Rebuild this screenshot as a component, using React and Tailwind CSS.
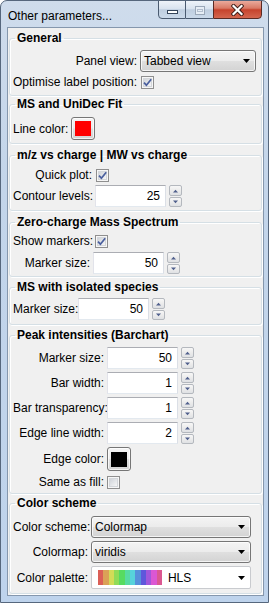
import React from "react";

const Tri = ({ up }) => (
  <svg width="7" height="4" viewBox="0 0 7 4" className="block">
    <path d={up ? "M1 3.5L3.5 0.8L6 3.5Z" : "M1 0.5L6 0.5L3.5 3.2Z"} fill="#4f5f8c" />
  </svg>
);

function SpinBtn({ up, className }) {
  return (
    <div
      className={
        "w-[13px] rounded-[2px] border border-[#b4b8be] bg-[linear-gradient(180deg,#f7f7f7_0%,#ececec_50%,#dfe1e4_100%)] flex items-center justify-center " +
        className
      }
    >
      <Tri up={up} />
    </div>
  );
}

function Spin({ value }) {
  return (
    <div className="flex items-center gap-[3px]">
      <div className="w-[71px] h-[22px] bg-white border border-[#abadb3] border-l-[#e2e3ea] border-r-[#dbdfe6] border-b-[#e3e9ef] flex items-center justify-end pr-[5px]">
        {value}
      </div>
      <div className="flex flex-col gap-[1px]">
        <SpinBtn up className="h-[11px]" />
        <SpinBtn className="h-[10px]" />
      </div>
    </div>
  );
}

function CheckBox({ checked, className = "" }) {
  return (
    <svg width="13" height="13" viewBox="0 0 13 13" className={"block " + className}>
      <defs>
        <linearGradient id="cbg" x1="0" y1="0" x2="1" y2="1">
          <stop offset="0" stopColor="#cdd1d7" />
          <stop offset="1" stopColor="#f8f8f8" />
        </linearGradient>
      </defs>
      <rect x="0.5" y="0.5" width="12" height="12" fill="#f6f6f6" stroke="#8f8f8f" />
      <rect x="2.5" y="2.5" width="8" height="8" fill="url(#cbg)" stroke="#d3d6da" />
      {checked && (
        <path d="M3 6.6L5.4 9.2L10.2 3.2" fill="none" stroke="#4a5f9e" strokeWidth="1.7" />
      )}
    </svg>
  );
}

function Combo({ text, className = "" }) {
  return (
    <div
      className={
        "h-[22px] rounded-[3px] border border-[#767676] bg-[linear-gradient(180deg,#f4f4f4_0%,#ececec_48%,#dfdfdf_52%,#d3d3d3_100%)] shadow-[inset_0_0_0_1px_rgba(255,255,255,0.75)] flex items-center pl-[3px] pr-[5px] " +
        className
      }
    >
      <span className="flex-1">{text}</span>
      <svg width="7" height="4" viewBox="0 0 7 4" className="block">
        <path d="M0 0H7L3.5 4Z" fill="#000" />
      </svg>
    </div>
  );
}

function ColorBtn({ color, className = "" }) {
  return (
    <div
      className={
        "w-[24px] rounded-[3px] border border-[#767676] bg-[linear-gradient(180deg,#f4f4f4_0%,#ececec_48%,#dfdfdf_52%,#d3d3d3_100%)] shadow-[inset_0_0_0_1px_rgba(255,255,255,0.75)] flex items-center justify-center " +
        className
      }
    >
      <div className={"w-[16px] h-[15px] " + color} />
    </div>
  );
}

const HLS = [
  "#db5f57",
  "#dba157",
  "#d3db57",
  "#91db57",
  "#57db5f",
  "#57dba1",
  "#57d3db",
  "#5791db",
  "#5f57db",
  "#a157db",
  "#db57d3",
  "#db5791",
];

function Group({ title, className = "", children }) {
  return (
    <fieldset
      className={
        "border border-[#d5dfe5] rounded-[3px] pl-[3px] pr-[4px] shadow-[inset_1px_1px_0_#ffffff,1px_1px_0_#ffffff] " +
        className
      }
    >
      <legend className="ml-[2px] px-[2px] font-bold leading-[14px]">{title}</legend>
      {children}
    </fieldset>
  );
}

function Row({ label, labelW, className = "h-[22px]", children }) {
  return (
    <div className={"flex items-center " + className}>
      <span className={"text-right pr-[3px] whitespace-nowrap " + labelW}>{label}</span>
      {children}
    </div>
  );
}

export default function App() {
  return (
    <div className="w-[269px] h-[603px] bg-[linear-gradient(180deg,#cfdcec_0%,#c3d5ea_30%,#bed3ec_100%)] border border-[#56677d] rounded-t-[7px] flex flex-col overflow-hidden font-['Liberation_Sans',Arial,sans-serif] text-[12px] text-black">
      {/* title bar */}
      <div className="h-[26px] flex items-start shrink-0">
        <span className="pl-[7px] pt-[8px] leading-[14px]">Other parameters...</span>
        <div className="ml-auto mr-[6px] flex h-[19px] -mt-[1px]">
          <div className="w-[28px] h-full border border-[#4a5a70] rounded-bl-[4px] bg-[linear-gradient(180deg,#eef3f9_0%,#d9e3ef_45%,#bfcee0_52%,#cbd9ea_100%)] flex items-center justify-center">
            <div className="w-[11px] h-[4px] mt-[5px] bg-white border border-[#34445a]" />
          </div>
          <div className="w-[27px] h-full border-y border-[#4a5a70] bg-[linear-gradient(180deg,#eef3f9_0%,#d9e3ef_45%,#bfcee0_52%,#cbd9ea_100%)] flex items-center justify-center">
            <div className="w-[10px] h-[9px] border border-[#9aa7b8] bg-[#e6edf5] flex items-center justify-center mt-[1px]">
              <div className="w-[6px] h-[3px] border border-[#b3bece]" />
            </div>
          </div>
          <div className="w-[49px] h-full border border-[#5a2a24] rounded-br-[4px] bg-[linear-gradient(180deg,#eaaa9c_0%,#d97a66_42%,#c6432d_52%,#d4664f_100%)] flex items-center justify-center">
            <svg width="13" height="12" viewBox="0 0 13 12" className="block">
              <path d="M2.5 2L10.5 10M10.5 2L2.5 10" stroke="#3a1a16" strokeWidth="4" strokeLinecap="square" />
              <path d="M2.5 2L10.5 10M10.5 2L2.5 10" stroke="#ffffff" strokeWidth="2.2" strokeLinecap="square" />
            </svg>
          </div>
        </div>
      </div>

      {/* client area */}
      <div className="ml-[6px] mr-[4px] mb-[6px] flex-1 bg-[#f0f0f0] border border-[#8597ad] flex flex-col px-[1px] pt-[3px]">
        <Group title="General" className="pt-[5px] pb-[5px]">
          <div className="flex flex-col gap-[2px]">
            <Row label="Panel view:" labelW="w-[127px]">
              <Combo text="Tabbed view" className="w-[116px]" />
            </Row>
            <Row label="Optimise label position:" labelW="w-[127px]" className="h-[16px]">
              <CheckBox checked className="ml-[1px]" />
            </Row>
          </div>
        </Group>

        <Group title="MS and UniDec Fit" className="mt-[1px] pt-[6px] pb-[3px]">
          <Row label="Line color:" labelW="w-[58px]" className="h-[23px]">
            <ColorBtn color="bg-[#ff0000]" className="h-[23px]" />
          </Row>
        </Group>

        <Group title="m/z vs charge | MW vs charge" className="mt-[4px] pt-[5px] pb-[3px]">
          <div className="flex flex-col gap-[2px]">
            <Row label="Quick plot:" labelW="w-[82px]" className="h-[16px]">
              <CheckBox checked className="ml-[1px]" />
            </Row>
            <Row label="Contour levels:" labelW="w-[82px]">
              <Spin value="25" />
            </Row>
          </div>
        </Group>

        <Group title="Zero-charge Mass Spectrum" className="mt-[4px] pt-[4px] pb-[2px]">
          <div className="flex flex-col gap-[3px]">
            <Row label="Show markers:" labelW="w-[80px]" className="h-[16px]">
              <CheckBox checked className="ml-[2px]" />
            </Row>
            <Row label="Marker size:" labelW="w-[80px]">
              <Spin value="50" />
            </Row>
          </div>
        </Group>

        <Group title="MS with isolated species" className="mt-[3px] pt-[4px] pb-[4px]">
          <Row label="Marker size:" labelW="w-[65px]">
            <Spin value="50" />
          </Row>
        </Group>

        <Group title="Peak intensities (Barchart)" className="mt-[3px] pt-[5px] pb-[3px]">
          <div className="flex flex-col gap-[3px]">
            <Row label="Marker size:" labelW="w-[94px]">
              <Spin value="50" />
            </Row>
            <Row label="Bar width:" labelW="w-[94px]">
              <Spin value="1" />
            </Row>
            <Row label="Bar transparency:" labelW="w-[94px]">
              <Spin value="1" />
            </Row>
            <Row label="Edge line width:" labelW="w-[94px]">
              <Spin value="2" />
            </Row>
            <Row label="Edge color:" labelW="w-[94px]" className="h-[24px]">
              <ColorBtn color="bg-[#000000]" className="h-[24px]" />
            </Row>
            <Row label="Same as fill:" labelW="w-[94px]" className="h-[16px]">
              <CheckBox />
            </Row>
          </div>
        </Group>

        <Group title="Color scheme" className="mt-[2px] pt-[6px] pb-[4px]">
          <div className="flex flex-col gap-[3px]">
            <Row label="Color scheme:" labelW="w-[78px]">
              <Combo text="Colormap" className="w-[160px]" />
            </Row>
            <Row label="Colormap:" labelW="w-[78px]">
              <Combo text="viridis" className="w-[160px]" />
            </Row>
            <Row label="Color palette:" labelW="w-[78px]" className="h-[23px]">
              <div className="w-[160px] h-[23px] bg-white border border-[#c9cbcf] rounded-[2px] flex items-center pl-[6px] pr-[5px]">
                <div className="flex h-[15px]">
                  {HLS.map((c) => (
                    <div key={c} className="w-[5.33px] h-full" style={{ backgroundColor: c }} />
                  ))}
                </div>
                <span className="ml-[6px] flex-1">HLS</span>
                <svg width="7" height="4" viewBox="0 0 7 4" className="block">
                  <path d="M0 0H7L3.5 4Z" fill="#000" />
                </svg>
              </div>
            </Row>
          </div>
        </Group>
      </div>
    </div>
  );
}
